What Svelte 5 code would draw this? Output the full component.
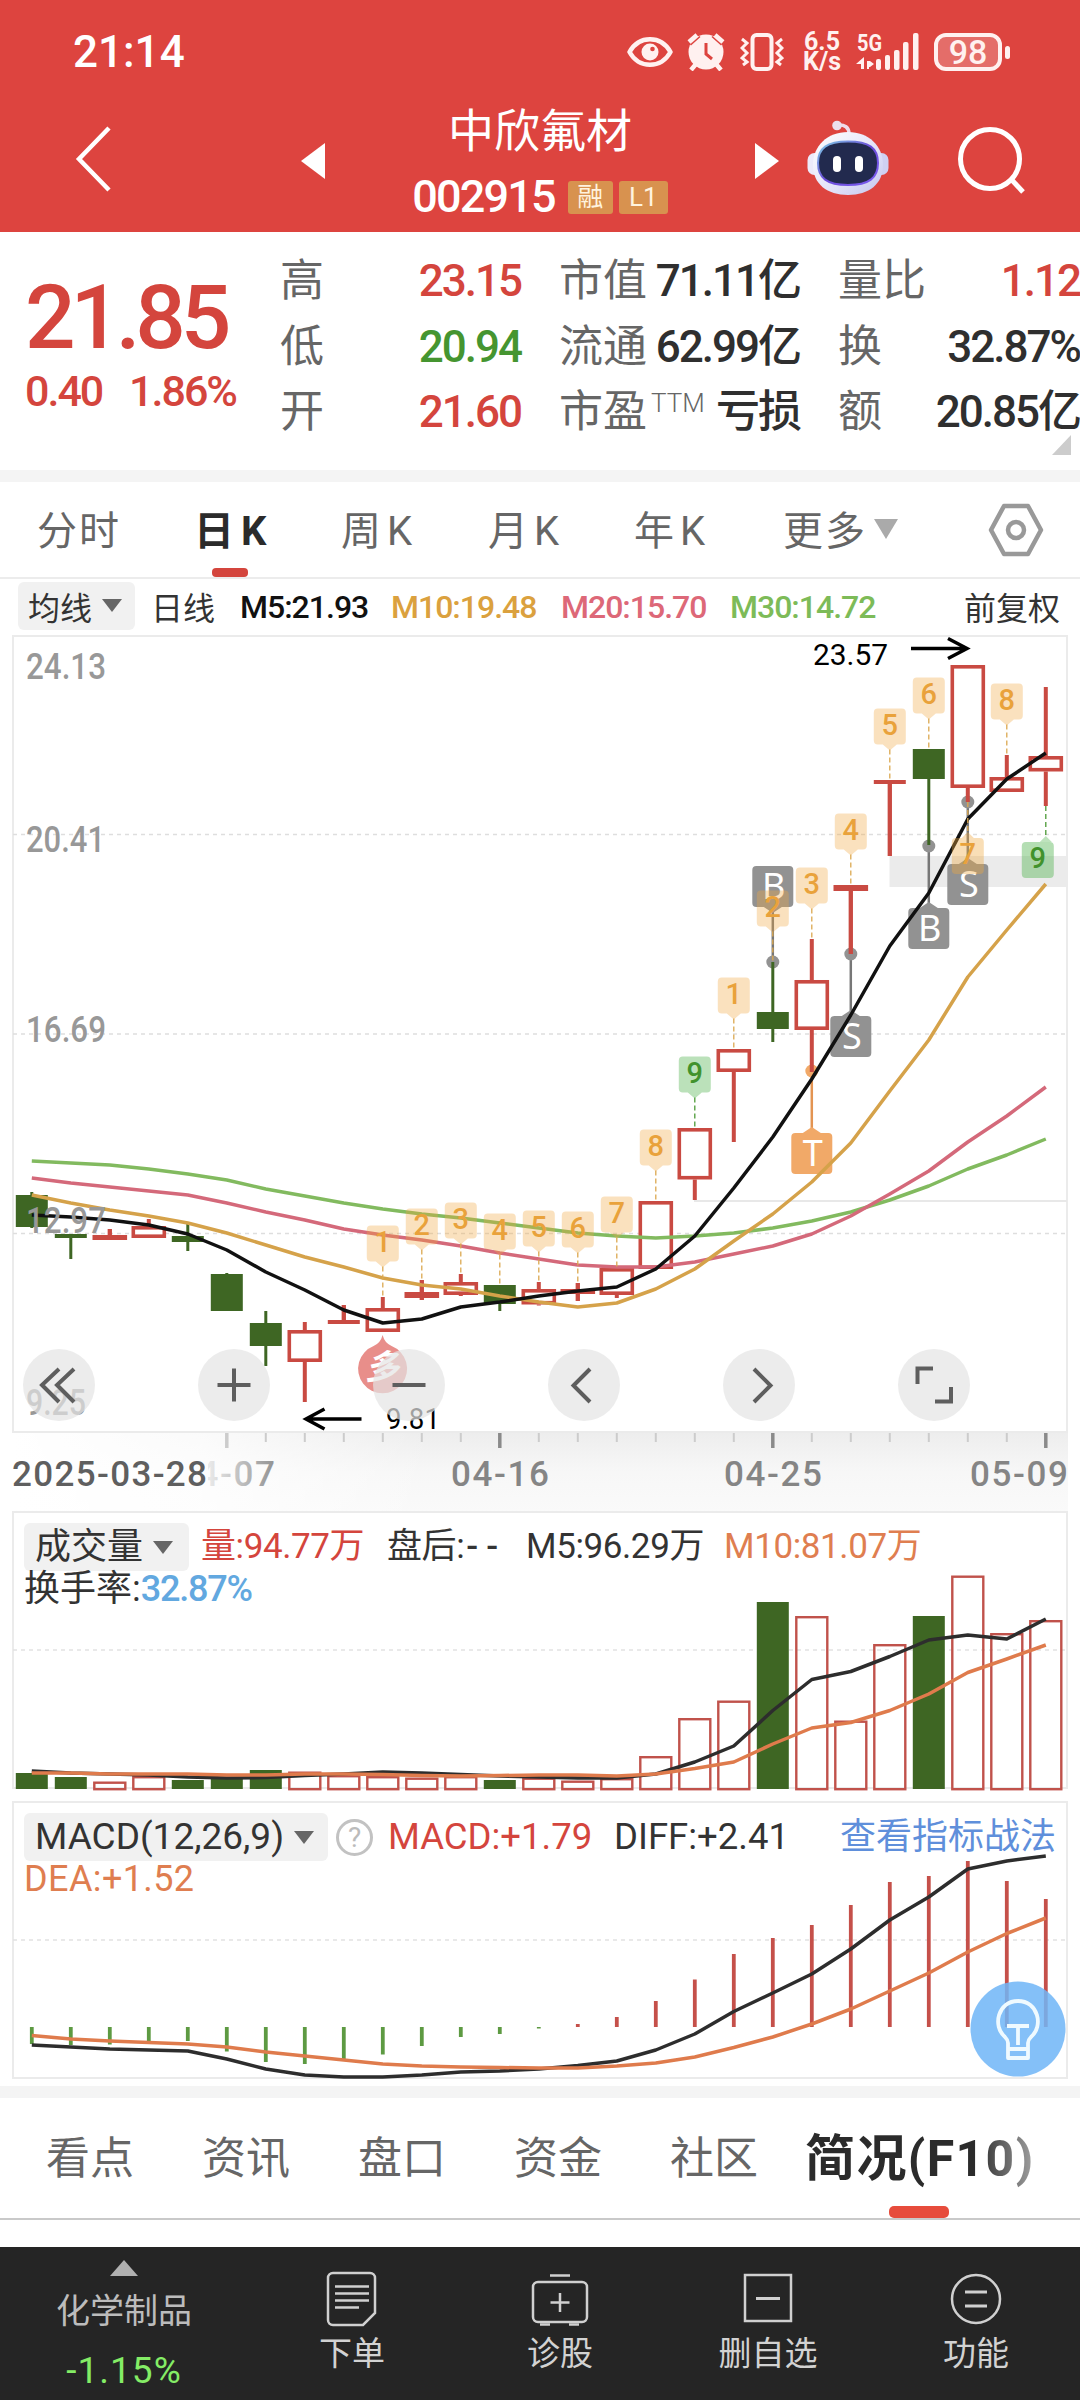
<script>
    const step = 39
    const x = i => 31.8 + i * step
    const line = values => values.map((y, i) => `${x(i)},${y}`).join(' ')

    // quote header
    const quotes = [
        { label: '高', value: '23.15', color: 'red' },
        { label: '市值', value: '71.11亿', color: 'dark' },
        { label: '量比', value: '1.12', color: 'red' },
        { label: '低', value: '20.94', color: 'green' },
        { label: '流通', value: '62.99亿', color: 'dark' },
        { label: '换', value: '32.87%', color: 'dark' },
        { label: '开', value: '21.60', color: 'red' },
        { label: '市盈', sup: 'TTM', value: '亏损', color: 'dark' },
        { label: '额', value: '20.85亿', color: 'dark' }
    ]

    const periods = ['分时', '日K', '周K', '月K', '年K']
    const infoTabs = ['看点', '资讯', '盘口', '资金', '社区']

    // [body top, body bottom, high, low, up]
    const candles = [
        [1195, 1227, 1192, 1228, 0], [1234, 1238, 1234, 1259, 0], [1235, 1240, 1229, 1240, 1],
        [1226, 1238, 1219, 1238, 1], [1236, 1242, 1224, 1251, 0], [1274, 1311, 1273, 1311, 0],
        [1323, 1346, 1311, 1366, 0], [1330, 1362, 1322, 1402, 1], [1320, 1324, 1305, 1324, 1],
        [1308, 1332, 1297, 1332, 1], [1292, 1298, 1280, 1300, 1], [1282, 1295, 1274, 1296, 1],
        [1285, 1304, 1285, 1311, 0], [1289, 1304.5, 1282, 1305.5, 1], [1289, 1294, 1283, 1301, 1],
        [1268, 1295, 1268, 1298, 1], [1201, 1269, 1201, 1269, 1], [1128, 1179.5, 1128, 1200, 1],
        [1049, 1072, 1049, 1142, 1], [1012, 1029, 962, 1042, 0], [980, 1030, 939, 1072, 1],
        [885, 891, 885, 954, 1], [780, 784, 780, 856, 1], [749, 779, 749, 845, 0],
        [665, 788, 665, 802, 1], [777, 792, 755, 792, 1], [756, 771.5, 687, 806, 1]
    ]

    const ma5 = [1215, 1217, 1220, 1225, 1234, 1250, 1272, 1290, 1310, 1323, 1319, 1307, 1302, 1296, 1291, 1287, 1269, 1236, 1188, 1137, 1079, 1015, 946, 893, 819, 779, 753]
    const ma10 = [1195, 1203, 1210, 1216, 1223, 1233, 1245, 1257, 1267, 1278, 1285, 1289, 1296, 1302, 1307, 1303, 1289, 1269, 1241, 1214, 1182, 1143, 1091, 1040, 977, 930, 884]
    const ma20 = [1178, 1183, 1187, 1191, 1195, 1203, 1212, 1220, 1229, 1235, 1240, 1246, 1253, 1259, 1265, 1267, 1267, 1262, 1254, 1246, 1234, 1216, 1194, 1171, 1142, 1116, 1087]
    const ma30 = [1161, 1163, 1165, 1169, 1174, 1180, 1189, 1196, 1203, 1209, 1214, 1218, 1223, 1228, 1233, 1236, 1238, 1236, 1233, 1228, 1221, 1212, 1200, 1186, 1169, 1155, 1139]

    // nine-turn counters, placed 72px above the candle's high
    const counts = [
        [9, 1], [10, 2], [11, 3], [12, 4], [13, 5], [14, 6], [15, 7], [16, 8], [17, 9],
        [18, 1], [19, 2], [20, 3], [21, 4], [22, 5], [23, 6], [25, 8]
    ]
    const countsBelow = [
        { i: 24, n: 7, top: 838, shift: 0 },
        { i: 26, n: 9, top: 842, shift: -8 }
    ]

    // trade markers: dot = y of the anchor, top = y of the box
    const trades = [
        { i: 19, t: 'B', dot: 962, top: 866, above: true },
        { i: 21, t: 'S', dot: 954, top: 1016 },
        { i: 23, t: 'B', dot: 846, top: 908 },
        { i: 24, t: 'S', dot: 802, top: 864 },
        { i: 20, t: 'T', dot: 1071, top: 1133 }
    ]

    const scale = [['24.13', 679, 80], ['20.41', 852, 79], ['16.69', 1042, 80], ['12.97', 1233, 80], ['9.25', 1415, 60]]

    const volumes = [1773, 1777, 1781.5, 1776, 1780, 1778, 1770, 1771.5, 1775, 1776, 1777.5, 1776, 1780, 1777.5, 1780.5, 1778, 1756, 1718, 1700.5, 1602, 1616, 1720.5, 1644, 1616, 1575.5, 1633, 1620]
    const vol5 = [1771, 1773, 1774, 1775, 1777, 1778, 1777.5, 1775.5, 1774, 1772, 1773, 1774.5, 1776, 1777, 1778, 1778, 1774, 1762, 1746, 1710.5, 1679.5, 1671.5, 1656.5, 1640, 1635, 1639, 1619]
    const vol10 = [1773, 1773, 1774, 1774, 1774, 1775, 1775, 1774, 1774, 1774.5, 1775.5, 1776, 1775.5, 1775, 1775, 1776, 1774, 1768.5, 1762, 1744, 1728, 1722.5, 1710.5, 1694, 1672.5, 1659, 1645]

    const zero = 2027
    const macd = [2044, 2045, 2044.5, 2041, 2041, 2051.5, 2062, 2064, 2059, 2054.5, 2046, 2037, 2034, 2028.5, 2024, 2017, 2001, 1979.5, 1954, 1938, 1925, 1905, 1882, 1876, 1861, 1881, 1899]
    const diff = [2045, 2047, 2049, 2050, 2051, 2059, 2069, 2075, 2077, 2077, 2075, 2072, 2071, 2069, 2065.5, 2061, 2050, 2034, 2011.5, 1993, 1974, 1949, 1920, 1897, 1869, 1861, 1856]
    const dea = [2035.5, 2039, 2041, 2042.5, 2044, 2047, 2052, 2056, 2060, 2064, 2066, 2067, 2067.5, 2068, 2068, 2066, 2063, 2057, 2047.5, 2037, 2024, 2009, 1991, 1973, 1952, 1933.5, 1918]
</script>

{#snippet caret(w, h, color)}
    <svg class="caret" width={w} height={h} viewBox="0 0 20 14" preserveAspectRatio="none"><path d="M0 0h20L10 14z" fill={color} /></svg>
{/snippet}

<div class="phone">
    <header class="top">
        <div class="status">
            <span class="clock">21:14</span>
            <div class="icons">
                <svg width="46" height="32" viewBox="0 0 46 32" fill="none" stroke="#fff1f0" stroke-width="4.5">
                    <path d="M2.5 16C12-1 34-1 43.500 16C34 33 12 33 2.500 16z" stroke-linejoin="round" />
                    <circle cx="23" cy="16" r="8.500" fill="#fff1f0" stroke="none" />
                    <circle cx="25.500" cy="13" r="2.300" fill="#dd443f" stroke="none" />
                </svg>
                <svg width="38" height="38" viewBox="0 0 38 38">
                    <circle cx="19" cy="19" r="17.500" fill="#fff1f0" />
                    <path d="M2 9L10 2M36 9L28 2M9 31L4 37M29 31l5 6" stroke="#fff1f0" stroke-width="4.500" />
                    <path d="M3.500 12L13 3.500M34.500 12L25 3.500" stroke="#dd443f" stroke-width="1.500" />
                    <path d="M19 10v11l6 5" stroke="#dd443f" stroke-width="3" fill="none" />
                </svg>
                <svg width="44" height="40" viewBox="0 0 44 40" fill="none" stroke="#fff1f0" stroke-width="3">
                    <rect x="12.500" y="3" width="19" height="34" rx="4" stroke-width="4" />
                    <path d="M2 7l5 4-5 5 5 5-5 5 5 4-4 3M42 7l-5 4 5 5-5 5 5 5-5 4 4 3" />
                </svg>
                <div class="speed"><span>6.5</span><span>K/s</span></div>
                <svg width="62" height="40" viewBox="0 0 62 40" fill="#fff1f0" overflow="visible">
                    <text x="0" y="18.500" font-size="24" font-weight="700" textLength="25" lengthAdjust="spacingAndGlyphs">5G</text>
                    <path d="M7 25v12H4V32H-1zM10 25v4h3l4 3-4 3h-1v2h-2V25z" />
                    <rect x="19" y="27" width="5" height="11" rx="2" /><rect x="28" y="23" width="5" height="15" rx="2" />
                    <rect x="37" y="18" width="5.500" height="20" rx="2" /><rect x="46" y="10" width="5.500" height="28" rx="2" />
                    <rect x="56" y="1" width="5.500" height="37" rx="2" />
                </svg>
                <div class="battery">98</div>
            </div>
        </div>
        <div class="nav">
            <svg width="40" height="66" viewBox="0 0 40 66" fill="none" stroke="#fff" stroke-width="4.500"><path d="M35 2L5 33l30 31" /></svg>
            <svg width="24" height="36" viewBox="0 0 24 36" fill="#fff"><path d="M24 0v36L0 18z" /></svg>
            <div class="title">
                <h1>中欣氟材</h1>
                <div class="code"><span>002915</span><i>融</i><i class="l1">L1</i></div>
            </div>
            <svg width="24" height="36" viewBox="0 0 24 36" fill="#fff"><path d="M0 0v36l24-18z" /></svg>
            <svg width="82" height="76" viewBox="0 0 82 76">
                <defs>
                    <linearGradient id="shell" x1="0" y1="0" x2="1" y2="1"><stop offset="0" stop-color="#fff" /><stop offset=".6" stop-color="#e2e2f8" /><stop offset="1" stop-color="#c3c6ee" /></linearGradient>
                    <linearGradient id="rim" x1="0" y1="0" x2="1" y2="1"><stop offset="0" stop-color="#7fd0e6" /><stop offset=".5" stop-color="#6b4bd8" /><stop offset="1" stop-color="#7a5df0" /></linearGradient>
                </defs>
                <path d="M30 5q12-1 12 9" stroke="#efdcea" stroke-width="3.500" fill="none" />
                <circle cx="30" cy="5.500" r="4.800" fill="#ecdfee" />
                <rect x="0.500" y="33" width="14" height="22" rx="7" fill="#eceafa" />
                <rect x="67.500" y="33" width="14" height="22" rx="7" fill="#cfd0f2" />
                <path d="M41 12C62 12 76 26 76 45S62 75 41 75 6 64 6 45 20 12 41 12z" fill="url(#shell)" />
                <path d="M41 21.500C62 21.500 71 28 71 43S62 65 41 65 11 58 11 43s9-21.500 30-21.500z" fill="#222a4e" stroke="url(#rim)" stroke-width="2" />
                <rect x="26" y="36" width="8" height="16" rx="4" fill="#fff" /><rect x="48" y="36" width="8" height="16" rx="4" fill="#fff" />
            </svg>
            <svg width="70" height="70" viewBox="0 0 70 70" fill="none" stroke="#fff" stroke-width="5"><circle cx="33" cy="33" r="29.500" /><path d="M54 53l12 13" /></svg>
        </div>
    </header>

    <section class="quote">
        <div class="price">
            <strong>21.85</strong>
            <div class="change"><span>0.40</span><span>1.86%</span></div>
        </div>
        <div class="stats">
            {#each quotes as q}
                <div class="stat">
                    <span class="label">{q.label}{#if q.sup}<sup>{q.sup}</sup>{/if}</span>
                    <span class="value {q.color}">{q.value}</span>
                </div>
            {/each}
            <svg class="corner" width="19" height="20"><path d="M19 0v20H0z" fill="#ccc" /></svg>
        </div>
    </section>

    <nav class="periods">
        {#each periods as p, i}
            <span class:k={i > 0} class:active={p === '日K'}>{p}</span>
        {/each}
        <span class="more">更多{@render caret(24, 20, '#aaa')}</span>
        <svg class="hex" width="56" height="54" viewBox="0 0 56 54" fill="none" stroke="#999" stroke-width="4.500" stroke-linejoin="round">
            <path d="M16 3h24l13 24-13 24H16L3 27z" /><circle cx="28" cy="27" r="8" />
        </svg>
    </nav>

    <div class="averages">
        <span class="select">均线{@render caret(20, 13, '#666')}</span>
        <span>日线</span>
        <span class="m5">M5:21.93</span>
        <span class="m10">M10:19.48</span>
        <span class="m20">M20:15.70</span>
        <span class="m30">M30:14.72</span>
        <span class="adjust">前复权</span>
    </div>

    <svg class="chart" width="1080" height="880" viewBox="0 632 1080 880">
        <defs>
            <linearGradient id="axisV" x1="0" y1="0" x2="0" y2="1"><stop offset="0" stop-color="#ededed" /><stop offset=".5" stop-color="#f7f7f7" /><stop offset="1" stop-color="#fafafa" /></linearGradient>
            <linearGradient id="axisH"><stop offset="0" stop-color="#fff" /><stop offset=".45" stop-color="#fff" stop-opacity=".75" /><stop offset="1" stop-color="#fff" stop-opacity="0" /></linearGradient>
            <linearGradient id="dateFade" gradientUnits="userSpaceOnUse" x1="205" y1="0" x2="280" y2="0"><stop offset="0" stop-color="#eee" /><stop offset="1" stop-color="#8c8c8c" /></linearGradient>
        </defs>
        <rect x="13" y="1432" width="1055" height="80" fill="url(#axisV)" />
        <rect x="13" y="1433" width="420" height="79" fill="url(#axisH)" />
        <rect x="13" y="636" width="1054" height="796" fill="none" stroke="#ebebeb" stroke-width="2" />
        {#each [834.5, 1034, 1233.5] as y}
            <path d="M13 {y}H1066" stroke="#dedede" stroke-width="1.300" stroke-dasharray="4 4" />
        {/each}
        <rect x="889.500" y="856" width="178" height="31" fill="#ebebeb" />
        <path d="M694 1201H1067" stroke="#e8e8e8" stroke-width="2" />

        {#each trades as t}
            {@const c = t.t === 'T' ? '#f1a968' : '#929292'}
            <path d="M{x(t.i)} {t.dot}V{t.above ? t.top + 46 : t.top - 5}" stroke={t.t === 'T' ? '#e39452' : '#777'} stroke-width="2.500" />
            <circle cx={x(t.i)} cy={t.dot} r="6.500" fill={c} />
            <rect x={x(t.i) - 20.5} y={t.top} width="41" height="41" rx="4" fill={c} />
            {#if t.above}
                <path d="M{x(t.i) - 9} {t.top + 41}h18l-9 6z" fill={c} />
            {:else}
                <path d="M{x(t.i) - 9} {t.top}h18l-9-6z" fill={c} />
            {/if}
            <text class="trade" x={x(t.i) + 1} y={t.top + 33}>{t.t}</text>
        {/each}

        {#each candles as [top, bottom, high, low, up], i}
            {#if up}
                <path d="M{x(i)} {high}V{top}M{x(i)} {bottom}V{low}" stroke="#c94a42" stroke-width="4" />
                {#if bottom - top < 7}
                    <rect x={x(i) - (bottom - top > 4 ? 17.3 : 16)} y={top} width={bottom - top > 4 ? 34.6 : 32} height={bottom - top} fill="#c94a42" />
                    <path d="M{x(i)} {high}V{low}" stroke="#c94a42" stroke-width="4" />
                {:else}
                    <rect x={x(i) - 15.5} y={top + 1.8} width="31" height={bottom - top - 3.6} fill="#fff" stroke="#c94a42" stroke-width="3.600" />
                {/if}
            {:else}
                <path d="M{x(i)} {high}V{low}" stroke="#3e6623" stroke-width="3" />
                <rect x={x(i) - 16} y={top} width="32" height={bottom - top} fill="#3e6623" />
            {/if}
        {/each}

        <polyline points={line(ma30)} stroke="#82ba5f" />
        <polyline points={line(ma20)} stroke="#d4697a" />
        <polyline points={line(ma10)} stroke="#d5a24a" />
        <polyline points={line(ma5)} stroke="#111" />

        {#each scale as [label, y, w]}
            <text class="scale" x="26" {y} textLength={w} lengthAdjust="spacingAndGlyphs">{label}</text>
        {/each}

        {#each counts as [i, n]}
            {@const top = candles[i][2] - 71.5}
            <path d="M{x(i)} {top + 41}V{top + 72}" stroke={n === 9 ? '#4b9a35' : '#dba850'} stroke-width="1.300" stroke-dasharray="5 3" />
            <path d="M{x(i) - 12} {top}h24a4 4 0 0 1 4 4v28a4 4 0 0 1-4 4h-5l-7 6-7-6h-5a4 4 0 0 1-4-4v-28a4 4 0 0 1 4-4z" fill={n === 9 ? '#5cb85a' : '#f0a840'} fill-opacity={n === 9 ? 0.42 : 0.34} />
            <text class="count" class:nine={n === 9} x={x(i)} y={top + 26}>{n}</text>
        {/each}
        {#each countsBelow as b}
            <path d="M{x(b.i)} {candles[b.i][3]}V{b.top - 5}" stroke={b.n === 9 ? '#4b9a35' : '#dba850'} stroke-width="1.300" stroke-dasharray="5 3" />
            <rect x={x(b.i) - 16 + b.shift} y={b.top} width="32" height="36" rx="4" fill={b.n === 9 ? '#5cb85a' : '#f0a840'} fill-opacity={b.n === 9 ? 0.46 : 0.38} />
            <path d="M{x(b.i) - 6} {b.top}h12l-6-6z" fill={b.n === 9 ? '#5cb85a' : '#f0a840'} fill-opacity="0.400" />
            <text class="count" class:nine={b.n === 9} x={x(b.i) + b.shift} y={b.top + 26}>{b.n}</text>
        {/each}

        <path d="M382.600 1335q2 8 9 11a24.500 24.500 0 1 1-18 0q7-3 9-11z" fill="#e88e8a" />
        <text class="bull" x="382" y="1379">多</text>

        <text class="extreme" x="813" y="665" textLength="75" lengthAdjust="spacingAndGlyphs">23.57</text>
        <path class="arrow" d="M911 648.500H966M948 638.500L967 648.500L948 658.500" />
        <text class="extreme" x="386" y="1429" textLength="54" lengthAdjust="spacingAndGlyphs">9.81</text>
        <path class="arrow" d="M361.500 1419H306M324.500 1409L306 1419L324.500 1429" />

        {#each [59, 234, 409, 584, 759, 934] as cx}
            <circle {cx} cy="1385" r="36" fill="#e4e4e4" fill-opacity=".7" />
        {/each}
        <g fill="none" stroke="#5e5e5e" stroke-width="4">
            <path d="M59 1369L42 1385L59 1402M74 1369L57 1385L74 1402" />
            <path d="M217.500 1385H250.500M234 1368.500V1401.500" />
            <path d="M392.500 1385H425.500" />
            <path d="M590 1369L573.500 1385.500L590 1402" />
            <path d="M754 1369L770.500 1385.500L754 1402" />
            <path d="M917.500 1384V1368.500H933M951 1387V1401.500H935" />
        </g>

        {#each candles as _, i}
            {#if i > 4}
                {@const major = i % 7 === 5}
                <path d="M{x(i)} 1433V{major ? 1448 : 1442}" stroke={major && i > 5 ? '#8a8a8a' : '#ccc'} stroke-width={major ? 3.5 : 2} />
            {/if}
        {/each}
        <text class="date first" x="12" y="1486" textLength="195" lengthAdjust="spacing">2025-03-28</text>
        <svg x="208" y="1440" width="80" height="60" viewBox="208 1440 80 60"><text class="date" x="177" y="1486" textLength="98" lengthAdjust="spacing" fill="url(#dateFade)">04-07</text></svg>
        <text class="date" x="451" y="1486" textLength="98" lengthAdjust="spacing">04-16</text>
        <text class="date" x="724" y="1486" textLength="98" lengthAdjust="spacing">04-25</text>
        <text class="date" x="970" y="1486" textLength="98" lengthAdjust="spacing">05-09</text>
    </svg>

    <section class="panel volume">
        <svg width="1080" height="280" viewBox="0 1511 1080 280">
            <rect x="13" y="1512" width="1054" height="276" fill="none" stroke="#ebebeb" stroke-width="2" />
            <path d="M13 1650H1066" stroke="#e2e2e2" stroke-width="1.500" stroke-dasharray="4 4" />
            {#each volumes as top, i}
                {#if candles[i][4]}
                    <rect x={x(i) - 15.5} y={top + 1.2} width="31" height={1788 - top} fill="none" stroke="#c0524b" stroke-width="2.400" />
                {:else}
                    <rect x={x(i) - 16} y={top} width="32" height={1789 - top} fill="#3e6623" />
                {/if}
            {/each}
            <polyline points={line(vol5)} stroke="#2d2d2d" />
            <polyline points={line(vol10)} stroke="#df7b4c" />
        </svg>
        <div class="legend">
            <div class="row">
                <span class="select">成交量{@render caret(20, 13, '#666')}</span>
                <span class="red">量:94.77万</span>
                <span>盘后:<span class="dashes">--</span></span>
                <span>M5:96.29万</span>
                <span class="orange">M10:81.07万</span>
            </div>
            <div class="second">换手率:<span class="blue">32.87%</span></div>
        </div>
    </section>

    <section class="panel macd">
        <svg width="1080" height="280" viewBox="0 1801 1080 280">
            <rect x="13" y="1802" width="1054" height="276" fill="none" stroke="#ebebeb" stroke-width="2" />
            <path d="M13 1940H1066" stroke="#e2e2e2" stroke-width="1.500" stroke-dasharray="4 4" />
            {#each macd as y, i}
                <path d="M{x(i)} {zero}V{y}" stroke={y > zero ? '#5d9a42' : '#c5504a'} stroke-width="3.800" />
            {/each}
            <polyline points={line(diff)} stroke="#2d2d2d" />
            <polyline points={line(dea)} stroke="#df7b4c" />
        </svg>
        <div class="legend">
            <div class="row">
                <span class="select">MACD(12,26,9){@render caret(20, 13, '#666')}</span>
                <span class="help">?</span>
                <span class="red">MACD:+1.79</span>
                <span>DIFF:+2.41</span>
                <span class="link">查看指标战法</span>
            </div>
            <div class="second orange">DEA:+1.52</div>
        </div>
        <svg class="lamp" width="96" height="96" viewBox="0 0 96 96">
            <circle cx="48" cy="48" r="47.500" fill="#70b6f7" fill-opacity=".86" />
            <g fill="none" stroke="#effaff" stroke-width="3.800" stroke-linejoin="round">
                <path d="M38 77V62Q38 59 35 56C22 45 28 20 48 20S74 45 61 56Q58 59 58 62V77z" />
                <path d="M37 45H59M48 45V64M38 68H58" />
            </g>
        </svg>
    </section>

    <nav class="info">
        {#each infoTabs as tab}
            <span>{tab}</span>
        {/each}
        <span class="active">简况(F10)</span>
    </nav>

    <footer>
        <div class="sector">
            <svg width="28" height="16"><path d="M14 0l14 16H0z" fill="#b0b0b0" /></svg>
            <span>化学制品</span>
            <span class="drop">-1.15%</span>
        </div>
        <div class="action">
            <svg width="58" height="58" viewBox="0 0 58 58"><path d="M10 4H47a5 5 0 0 1 5 5V44L40 56H10a5 5 0 0 1-5-5V9a5 5 0 0 1 5-5zM12 17.500H46M12 24.500H46M12 31.500H46M12 38.500H36" /></svg>
            <span>下单</span>
        </div>
        <div class="action">
            <svg width="58" height="58" viewBox="0 0 58 58"><rect x="2" y="13" width="54" height="40" rx="5" /><path d="M19 6.500H39M29 24V43M19.500 33.500H38.500M9 55.500H19M38 55.500H48" /></svg>
            <span>诊股</span>
        </div>
        <div class="action">
            <svg width="58" height="58" viewBox="0 0 58 58"><rect x="6" y="6" width="46" height="46" /><path d="M17 29.500H41" stroke-width="3" /></svg>
            <span>删自选</span>
        </div>
        <div class="action">
            <svg width="58" height="58" viewBox="0 0 58 58"><circle cx="29" cy="30" r="24" /><path d="M18 23H40M18 37H40" stroke-width="3" /></svg>
            <span>功能</span>
        </div>
    </footer>
</div>

<style>
    :global(body) {
        margin: 0;
        background: #fff;
    }

    .phone {
        width: 1080px;
        height: 2400px;
        overflow: hidden;
        display: flex;
        flex-direction: column;
        background: #fff;
        color: #333;
        font-family: Roboto, 'Noto Sans CJK SC', sans-serif;
    }

    svg {
        display: block;
        flex: none;
    }

    .red { color: #d4453d; }
    .green { color: #459530; }
    .dark { color: #2f2f2f; }
    .orange { color: #df7e50; }
    .blue { color: #62a8e0; }

    .top {
        height: 232px;
        flex: none;
        background: #dd443f;
        color: #fff;
    }

    .status {
        height: 104px;
        box-sizing: border-box;
        padding: 0 78px 0 73px;
        display: flex;
        align-items: center;
        justify-content: space-between;
    }

    .clock {
        font-size: 44px;
        font-weight: 500;
    }

    .icons {
        display: flex;
        align-items: center;
        color: #fff1f0;
    }

    .icons > :nth-child(2) { margin-left: 14px; }
    .icons > :nth-child(3) { margin-left: 15px; }

    .speed {
        width: 40px;
        margin-left: 18px;
        display: flex;
        flex-direction: column;
        align-items: center;
        font-size: 25px;
        line-height: 20px;
        font-weight: 700;
    }

    .speed + svg {
        margin-left: 15px;
    }

    .battery {
        position: relative;
        width: 68px;
        height: 38px;
        margin-left: 15px;
        box-sizing: border-box;
        border: 4px solid #fff1f0;
        border-radius: 12px;
        background: rgba(255, 255, 255, 0.22);
        font-size: 34px;
        line-height: 31px;
        font-weight: 500;
        text-align: center;
    }

    .battery::after {
        content: '';
        position: absolute;
        right: -12px;
        top: 9px;
        width: 5px;
        height: 13px;
        border-radius: 3px;
        background: #fff1f0;
    }

    .nav {
        display: grid;
        grid-template-columns: 40px 24px 284px 24px 82px 70px;
        padding-left: 72px;
        height: 128px;
        align-items: start;
    }

    .nav > :nth-child(1) { margin: 22px 0 0 2px; }
    .nav > :nth-child(2) { margin: 39px 0 0 189px; }
    .nav > :nth-child(3) { margin-left: 189px; width: 430px; }
    .nav > :nth-child(4) { margin: 39px 0 0 335px; }
    .nav > :nth-child(5) { margin: 16px 0 0 363px; }
    .nav > :nth-child(6) { margin: 22px 0 0 431px; }

    .title {
        display: flex;
        flex-direction: column;
        align-items: center;
    }

    h1 {
        margin: 0;
        font-size: 46px;
        line-height: 54px;
        font-weight: 400;
    }

    .code {
        display: flex;
        align-items: center;
        margin-top: 15px;
        font-size: 45px;
        line-height: 48px;
        font-weight: 500;
        letter-spacing: -1.8px;
    }

    .code i {
        width: 45px;
        height: 33px;
        margin-left: 13px;
        border-radius: 3px;
        background: #d8924f;
        color: #fff3df;
        font-size: 26px;
        line-height: 32px;
        font-style: normal;
        font-weight: 400;
        text-align: center;
        letter-spacing: 0;
    }

    .code .l1 {
        width: 49px;
        margin-left: 6px;
    }

    .quote {
        height: 250px;
        flex: none;
        box-sizing: border-box;
        border-bottom: 12px solid #f4f4f4;
        display: flex;
    }

    .price {
        width: 280px;
        padding: 37px 0 0 25px;
        box-sizing: border-box;
        color: #d4453d;
    }

    .price strong {
        display: block;
        font-size: 89px;
        line-height: 98px;
        font-weight: 500;
        letter-spacing: -5.2px;
    }

    .change {
        display: flex;
        justify-content: space-between;
        width: 211px;
        font-size: 43px;
        line-height: 48px;
        font-weight: 500;
        letter-spacing: -2px;
    }

    .stats {
        position: relative;
        flex: 1;
        display: grid;
        grid-template-columns: 241px 241px 242px;
        grid-template-rows: repeat(3, 65.500px);
        column-gap: 38px;
        padding-top: 17px;
    }

    .stat {
        display: flex;
        align-items: center;
        justify-content: space-between;
        font-size: 44px;
        line-height: 65px;
        white-space: nowrap;
    }

    .label {
        color: #666;
    }

    .label sup {
        margin-left: 4px;
        font-size: 26px;
        line-height: 0;
        vertical-align: 15px;
        font-weight: 300;
    }

    .value {
        font-weight: 500;
        letter-spacing: -2px;
    }

    .corner {
        position: absolute;
        right: 9px;
        bottom: 15px;
    }

    .periods {
        position: relative;
        height: 97px;
        flex: none;
        box-sizing: border-box;
        border-bottom: 2px solid #ececec;
        display: grid;
        grid-template-columns: 157px 147px 147px 146px 149px 205px 56px;
        padding-left: 37px;
        align-items: center;
        font-size: 40px;
        color: #666;
    }

    .periods span {
        position: relative;
        display: flex;
        height: 100%;
        box-sizing: border-box;
        padding-bottom: 3px;
        align-items: center;
        letter-spacing: 2px;
    }

    .periods .k {
        letter-spacing: 6px;
    }

    .periods .active {
        color: #2b2b2b;
        font-weight: 700;
        letter-spacing: 7px;
    }

    .periods .active::after {
        content: '';
        position: absolute;
        left: 18px;
        bottom: 0;
        width: 36px;
        height: 9px;
        border-radius: 4px;
        background: #d4453d;
    }

    .more .caret {
        margin-left: 7px;
        margin-top: 2px;
    }

    .averages {
        height: 53px;
        flex: none;
        display: grid;
        grid-template-columns: 133px 89px 151px 170px 169px 234px auto;
        align-items: center;
        padding-left: 18px;
        font-size: 32px;
        white-space: nowrap;
    }

    .select {
        display: flex;
        align-items: center;
        height: 48px;
        background: #f1f1f1;
        border-radius: 6px;
    }

    .averages .select {
        width: 117px;
        padding-left: 10px;
        box-sizing: border-box;
    }

    .averages .caret {
        margin-left: 10px;
    }

    .m5, .m10, .m20, .m30 {
        font-weight: 500;
        letter-spacing: -1px;
        padding-top: 3px;
    }

    .m5 { color: #111; }
    .m10 { color: #dba13e; }
    .m20 { color: #dd6878; }
    .m30 { color: #7dbb58; }

    .chart {
        height: 880px;
        margin-bottom: -1px;
    }

    polyline {
        fill: none;
        stroke-width: 3.5;
        stroke-linejoin: round;
    }

    .trade {
        fill: #fff;
        font: 36px 'Noto Sans', sans-serif;
        text-anchor: middle;
    }

    .count {
        fill: #e9a23b;
        font-size: 29px;
        font-weight: 500;
        text-anchor: middle;
    }

    .nine {
        fill: #41922c;
    }

    .scale {
        fill: #989898;
        font-size: 36px;
        font-weight: 500;
    }

    .bull {
        fill: #fff;
        font-size: 34px;
        font-style: italic;
        font-weight: 700;
        text-anchor: middle;
    }

    .extreme {
        fill: #000;
        font-size: 30px;
    }

    .arrow {
        fill: none;
        stroke: #000;
        stroke-width: 3.5;
    }

    .date {
        font-size: 35px;
        font-weight: 500;
    }

    .date:not([fill]) {
        fill: #858585;
    }

    .first:not([fill]) {
        fill: #5f5f5f;
    }

    .panel {
        position: relative;
        height: 290px;
        flex: none;
    }

    .macd {
        height: 285px;
    }

    /* the legend lies over the plot */
    .legend {
        position: absolute;
        left: 24px;
        top: 12px;
        font-size: 35px;
        white-space: nowrap;
    }

    .row {
        display: grid;
        align-items: center;
        height: 48px;
        line-height: 48px;
    }

    .volume .row {
        grid-template-columns: 177px 186px 139px 198px auto;
        letter-spacing: -0.4px;
    }

    .macd .row {
        grid-template-columns: 312px 52px 226px 226px auto;
        font-size: 36.5px;
    }

    .row .select {
        padding-left: 11px;
        box-sizing: border-box;
        width: 165px;
        font-size: 36px;
        letter-spacing: 0;
    }

    .macd .select {
        width: 304px;
        font-size: 37px;
    }

    .row .caret {
        margin-left: 10px;
    }

    .dashes {
        margin-left: 2px;
        font-weight: 500;
        letter-spacing: 8px;
    }

    .second {
        margin-top: 1px;
        line-height: 34px;
        font-size: 36px;
    }

    .volume .blue {
        font-weight: 500;
        letter-spacing: -1.2px;
    }

    .macd .second {
        letter-spacing: 0.4px;
    }

    .help {
        width: 31px;
        height: 31px;
        border: 3px solid #c2c2c2;
        border-radius: 50%;
        color: #bbb;
        font-size: 28px;
        line-height: 32px;
        text-align: center;
    }

    .link {
        color: #5f8fdb;
        font-size: 36px;
    }

    .lamp {
        position: absolute;
        left: 970px;
        top: 180px;
    }

    .info {
        height: 134px;
        flex: none;
        box-sizing: border-box;
        border-top: 12px solid #f4f4f4;
        border-bottom: 2px solid #c9c9c9;
        display: grid;
        grid-template-columns: repeat(4, 156px) 135px auto;
        padding-left: 46px;
        font-size: 44px;
        line-height: 123px;
        color: #666;
    }

    .info span {
        height: 120px;
    }

    .info .active {
        position: relative;
        font-size: 50px;
        font-weight: 700;
        letter-spacing: 1.4px;
        background: linear-gradient(90deg, #2b2b2b 62%, #999 82%);
        -webkit-background-clip: text;
        background-clip: text;
        color: transparent;
    }

    .info .active::after {
        content: '';
        position: absolute;
        left: 84px;
        bottom: 0;
        width: 60px;
        height: 12px;
        border-radius: 5px;
        background: #e74c3c;
    }

    footer {
        height: 153px;
        margin-top: 27px;
        flex: none;
        display: grid;
        grid-template-columns: 248px 208px 208px 208px 208px;
        background: #252525;
        color: #d2d2d2;
    }

    .sector,
    .action {
        display: flex;
        flex-direction: column;
        align-items: center;
        font-size: 33px;
    }

    .sector {
        padding-top: 13px;
        color: #bcbcbc;
    }

    .sector span {
        margin-top: 10px;
        font-size: 34px;
        line-height: 50px;
    }

    .sector .drop {
        color: #84ec66;
        font-size: 37px;
        letter-spacing: 1px;
    }

    .action {
        padding-top: 22px;
        gap: 2px;
        line-height: 50px;
    }

    .action svg {
        fill: none;
        stroke: #d0d0d0;
        stroke-width: 2.5;
    }
</style>
